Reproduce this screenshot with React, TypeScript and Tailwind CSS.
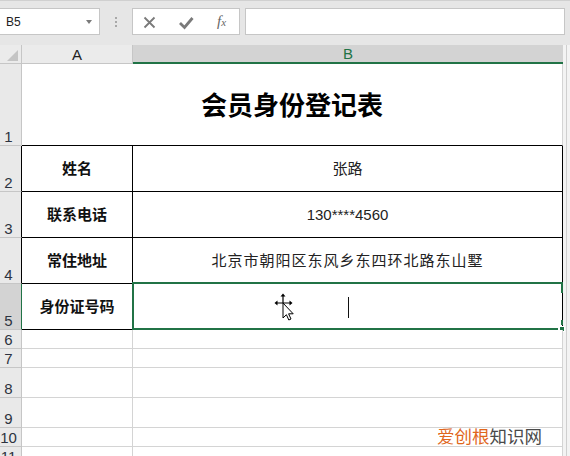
import type { ReactNode } from "react";

type Row = {
  n: number;
  h: string;
  a?: string;
  b?: string;
  table?: boolean;
};

const rows: Row[] = [
  { n: 1, h: "h-[82px]" },
  { n: 2, h: "h-[46px]", a: "姓名", b: "张路", table: true },
  { n: 3, h: "h-[46px]", a: "联系电话", b: "130****4560", table: true },
  { n: 4, h: "h-[46px]", a: "常住地址", b: "北京市朝阳区东风乡东四环北路东山墅", table: true },
  { n: 5, h: "h-[46px]", a: "身份证号码", b: "", table: true },
  { n: 6, h: "h-[19px]" },
  { n: 7, h: "h-[19px]" },
  { n: 8, h: "h-[30px]" },
  { n: 9, h: "h-[30px]" },
  { n: 10, h: "h-[19px]" },
  { n: 11, h: "h-[19px]" },
];

function Strip() {
  return (
    <div className="flex h-full w-[7px] shrink-0 bg-[#f3f3f3]">
      <div className="h-full w-[4px] border-r border-[#cfcfcf]" />
    </div>
  );
}

function Toolbar() {
  return (
    <div className="flex h-[45px] items-start border-t border-[#d0d0d0] bg-[#e6e6e6] pt-[7px]">
      <div className="relative flex h-[27px] w-[100px] shrink-0 items-center border border-l-0 border-[#c6c6c6] bg-white pl-[6px] text-[12px] text-[#222]">
        B5
        <span className="absolute right-[7px] top-[11px] h-0 w-0 border-x-[3px] border-t-[4px] border-x-transparent border-t-[#7a7a7a]" />
      </div>
      <div className="flex w-[32px] shrink-0 flex-col items-center gap-[2px] pt-[9px]">
        <span className="size-[2px] bg-[#a8a8a8]" />
        <span className="size-[2px] bg-[#a8a8a8]" />
        <span className="size-[2px] bg-[#a8a8a8]" />
      </div>
      <div className="flex h-[27px] w-[108px] shrink-0 items-center border border-[#c6c6c6] bg-white">
        <svg viewBox="0 0 72 25" className="h-[25px] w-[72px] shrink-0" aria-hidden="true">
          <path d="M11.5 8.5l10 10M21.5 8.5l-10 10" stroke="#7a7a7a" strokeWidth="1.8" fill="none" />
          <path d="M47 14l4.5 4.5L59.5 9" stroke="#7a7a7a" strokeWidth="2.8" fill="none" />
        </svg>
        <span className="ml-[12px] [font-family:'Liberation_Serif',serif] text-[15px] italic text-[#666]">
          f<span className="text-[11px]">x</span>
        </span>
      </div>
      <div className="ml-[5px] mr-[5px] h-[27px] flex-1 border border-[#c6c6c6] bg-white" />
    </div>
  );
}

function HeaderRow() {
  return (
    <div className="flex h-[19px] bg-[#e6e6e6]">
      <div className="relative w-[22px] shrink-0 border-b border-r border-[#c6c6c6] bg-[#ebebeb]">
        <span className="absolute bottom-[2px] right-[3px] h-0 w-0 border-b-[11px] border-l-[11px] border-b-[#c4c4c4] border-l-transparent" />
      </div>
      <div className="flex w-[111px] shrink-0 items-end justify-center border-b border-r border-[#c6c6c6] bg-[#ebebeb] text-[15px] leading-[16px] text-[#222]">
        A
      </div>
      <div className="flex w-[430px] shrink-0 items-end justify-center border-b-2 border-[#217346] bg-[#d3d3d3] text-[15px] leading-[16px] text-[#217346]">
        B
      </div>
      <Strip />
    </div>
  );
}

function MoveCursor() {
  return (
    <svg viewBox="0 0 22 30" className="absolute left-[141px] top-[8px] h-[30px] w-[22px]" aria-hidden="true">
      <path d="M9 4v7M2 11h14" stroke="#000" strokeWidth="1.2" fill="none" />
      <path d="M9 1.5l-2.5 3h5z" fill="#000" />
      <path d="M0.5 11l3-2.5v5z" fill="#000" />
      <path d="M18.5 11l-3-2.5v5z" fill="#000" />
      <path
        d="M9 11v15l3.4-3.3 2.4 5.3 2.2-1-2.4-5.2h4.6z"
        fill="#fff"
        stroke="#000"
        strokeWidth="1"
        strokeLinejoin="miter"
      />
    </svg>
  );
}

function Selection() {
  return (
    <>
      <div className="absolute -left-[1px] -top-[2px] h-[2px] w-[430px] bg-[#217346]" />
      <div className="absolute -bottom-[1px] -left-[1px] h-[2px] w-[426px] bg-[#217346]" />
      <div className="absolute -left-[1px] -top-[2px] bottom-0 w-[2px] bg-[#217346]" />
      <div className="absolute -right-[1px] -top-[2px] h-[11px] w-[2px] bg-[#217346]" />
      <div className="absolute -right-[1px] bottom-[4px] h-[5px] w-[2px] bg-[#217346]" />
      <div className="absolute -bottom-[3px] -right-[3px] size-[6px] border border-white bg-[#217346]" />
      <MoveCursor />
      <span className="absolute left-[215px] top-[13px] h-[21px] w-[1px] bg-[#111]" />
    </>
  );
}

function Cell({ className, children }: { className: string; children?: ReactNode }) {
  return <div className={`relative flex shrink-0 items-center justify-center ${className}`}>{children}</div>;
}

function SheetRow({ row }: { row: Row }) {
  const selected = row.n === 5;
  const headerBorder = selected
    ? "border-r-[#217346]"
    : row.table
      ? "border-r-black"
      : "border-r-[#c6c6c6]";

  return (
    <div className={`flex shrink-0 ${row.h}`}>
      <div
        className={`flex w-[22px] shrink-0 items-end border-b border-r border-b-[#c6c6c6] ${headerBorder} ${
          selected ? "bg-[#d3d3d3]" : "bg-[#e9e9e9]"
        }`}
      >
        <span className="w-[17px] text-center text-[15px] leading-[17px] text-[#2d3340]">{row.n}</span>
      </div>

      {row.n === 1 ? (
        <Cell className="w-[541px] border-b border-r border-b-black border-r-[#d4d4d4] bg-white pt-[4px] text-[26px] font-bold text-black">
          会员身份登记表
        </Cell>
      ) : row.table ? (
        <>
          <Cell className="w-[111px] border-b border-r border-black bg-white pt-[1px] text-[15px] font-bold text-[#111]">
            {row.a}
          </Cell>
          <Cell
            className={`w-[430px] border-b border-r border-r-black bg-white pt-[1px] text-[15px] text-[#222] ${
              selected ? "border-b-transparent" : "border-b-black"
            } ${row.n === 4 ? "tracking-[1px]" : ""}`}
          >
            {row.b}
            {selected ? <Selection /> : null}
          </Cell>
        </>
      ) : (
        <>
          <Cell className="w-[111px] border-b border-r border-[#d4d4d4] bg-white" />
          <Cell className="w-[430px] border-b border-r border-[#d4d4d4] bg-white" />
        </>
      )}
      <Strip />
    </div>
  );
}

export default function App() {
  return (
    <div className="relative h-[456px] w-[570px] overflow-hidden bg-white [font-family:'Liberation_Sans','Noto_Sans_CJK_SC',sans-serif]">
      <Toolbar />
      <HeaderRow />
      {rows.map((row) => (
        <SheetRow key={row.n} row={row} />
      ))}
      <div className="absolute left-[437px] top-[425px] text-[17.5px] leading-[22px] [font-family:'Noto_Sans_CJK_SC',sans-serif]">
        <span className="text-[#e0661c]">爱创根</span>
        <span className="text-[#4a4a4a]">知识网</span>
      </div>
    </div>
  );
}
